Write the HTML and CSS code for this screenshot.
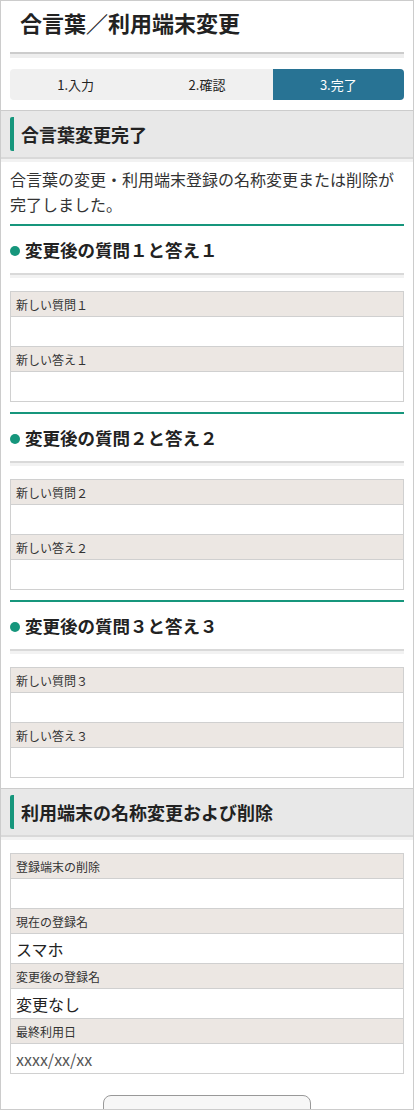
FILE: index.html
```html
<!DOCTYPE html>
<html lang="ja">
<head>
  <meta charset="utf-8">
  <title>合言葉／利用端末変更</title>
  <link rel="stylesheet" href="styles.css">
</head>
<body>
  <div class="page">
    <h1 class="title">合言葉／利用端末変更</h1>
    <div class="rule"></div>

    <ol class="steps">
      <li>1.入力</li>
      <li>2.確認</li>
      <li class="current">3.完了</li>
    </ol>

    <h2 class="section-head"><span>合言葉変更完了</span></h2>
    <div class="section-body">
      <p class="lead">合言葉の変更・利用端末登録の名称変更または削除が完了しました。</p>

      <h3 class="sub-head">変更後の質問１と答え１</h3>
      <table class="info">
        <tr><th>新しい質問１</th></tr>
        <tr><td></td></tr>
        <tr><th>新しい答え１</th></tr>
        <tr><td></td></tr>
      </table>

      <h3 class="sub-head">変更後の質問２と答え２</h3>
      <table class="info">
        <tr><th>新しい質問２</th></tr>
        <tr><td></td></tr>
        <tr><th>新しい答え２</th></tr>
        <tr><td></td></tr>
      </table>

      <h3 class="sub-head">変更後の質問３と答え３</h3>
      <table class="info">
        <tr><th>新しい質問３</th></tr>
        <tr><td></td></tr>
        <tr><th>新しい答え３</th></tr>
        <tr><td></td></tr>
      </table>
    </div>

    <h2 class="section-head"><span>利用端末の名称変更および削除</span></h2>
    <div class="section-body">
      <table class="info">
        <tr><th>登録端末の削除</th></tr>
        <tr><td></td></tr>
        <tr><th>現在の登録名</th></tr>
        <tr><td>スマホ</td></tr>
        <tr><th>変更後の登録名</th></tr>
        <tr><td>変更なし</td></tr>
        <tr><th>最終利用日</th></tr>
        <tr><td class="date">xxxx/xx/xx</td></tr>
      </table>
    </div>

    <div class="actions">
      <button type="button" class="btn"></button>
    </div>
  </div>
</body>
</html>
```

FILE: styles.css
```css
html, body {
  margin: 0;
  padding: 0;
  background: #fff;
}
body {
  font-family: "Noto Sans CJK JP", "Noto Sans", sans-serif;
  color: #333;
}
.page {
  box-sizing: border-box;
  width: 414px;
  height: 1110px;
  border: 1px solid #ccc;
  overflow: hidden;
}

.title {
  margin: 0;
  padding: 6px 0 0 19px;
  height: 45px;
  font-size: 22px;
  line-height: 30px;
  font-weight: bold;
  color: #222;
}
.rule {
  margin: 0 9px;
  height: 4px;
  border-top: 2px solid #ccc;
  background: #eee;
}

/* stepper */
.steps {
  list-style: none;
  display: flex;
  margin: 11px 9px 0;
  padding: 0;
  height: 31px;
  background: #f0f0f0;
  border-radius: 4px;
  overflow: hidden;
}
.steps li {
  flex: 1;
  display: flex;
  align-items: center;
  justify-content: center;
  font-size: 13px;
  color: #222;
}
.steps li.current {
  background: #287394;
  color: #fff;
}

/* section header */
.section-head {
  margin: 10px 0 0;
  padding: 6px 9px;
  border-top: 1px solid #ccc;
  border-bottom: 2px solid #d9d9d9;
  box-shadow: 0 3px 0 #f2f2f2;
  background: #e8e8e8;
  font-size: 18px;
  font-weight: bold;
  color: #222;
}
.section-head span {
  display: block;
  border-left: 4px solid #16967c;
  border-radius: 2px;
  padding-left: 7px;
  line-height: 34px;
}

.section-body {
  padding: 0 9px;
}
.lead {
  margin: 8px 0 0;
  font-size: 16px;
  line-height: 25px;
  color: #333;
  padding-bottom: 7px;
  border-bottom: 2px solid #16967c;
}

.sub-head {
  position: relative;
  margin: 0;
  padding: 10px 0 9px 15px;
  font-size: 17.5px;
  line-height: 28px;
  font-weight: bold;
  color: #222;
  border-bottom: 2px solid #d9d9d9;
  box-shadow: 0 3px 0 #f2f2f2;
}
.sub-head::before {
  content: "";
  position: absolute;
  left: 0;
  top: 20px;
  width: 10px;
  height: 10px;
  border-radius: 50%;
  background: #16967c;
}

.info {
  width: 100%;
  margin: 16px 0 0;
  border-collapse: collapse;
  border: 1px solid #d0d0d0;
}
.info + .sub-head {
  margin-top: 10px;
  border-top: 2px solid #16967c;
}
.info th,
.info td {
  border-top: 1px solid #d0d0d0;
  padding: 0 5px;
  text-align: left;
}
.info th {
  height: 24px;
  background: #ece7e3;
  font-size: 12px;
  font-weight: normal;
  color: #333;
}
.info td {
  height: 29px;
  font-size: 16px;
  color: #222;
}
.info td.date {
  font-size: 16px;
  color: #555;
}

.actions {
  display: flex;
  justify-content: center;
  margin-top: 21px;
}
.btn {
  width: 208px;
  height: 44px;
  border: 1px solid #999;
  border-radius: 8px;
  background: #f7f7f7;
}
```
